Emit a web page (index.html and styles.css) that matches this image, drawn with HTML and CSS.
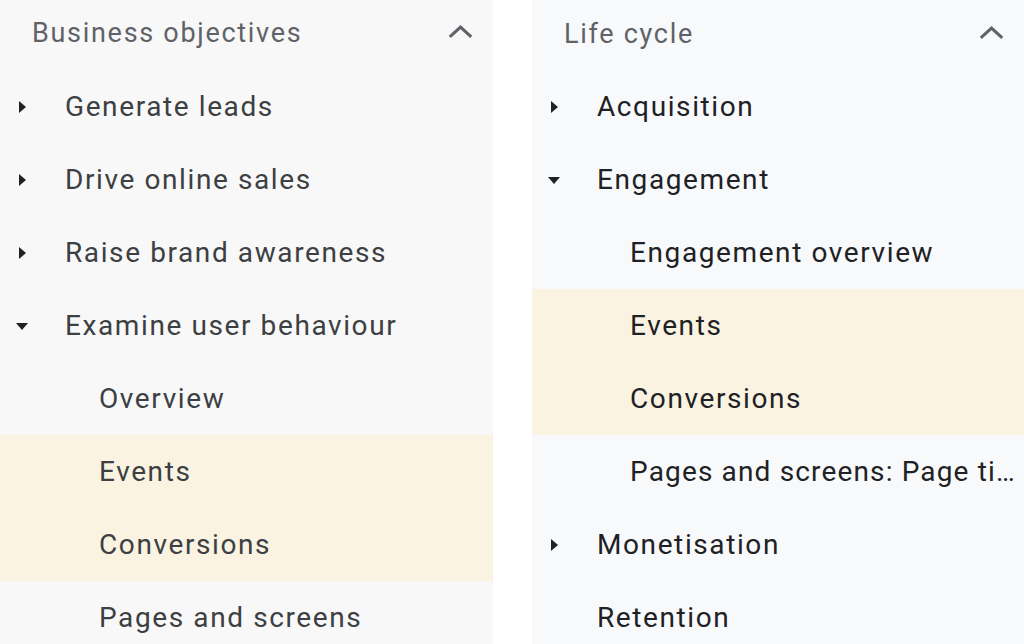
FILE: index.html
```html
<!DOCTYPE html>
<html lang="en">
<head>
    <meta charset="UTF-8">
    <title>Reports navigation</title>
    <link rel="stylesheet" href="styles.css">
</head>
<body>

    <div class="panels">

        <!-- Business objectives collection -->
        <nav class="panel panel-left">
            <div class="panel-header">
                <span class="header-title">Business objectives</span>
                <svg class="chevron" viewBox="0 0 28 16"><path d="M2 14L14 3l12 11"/></svg>
            </div>
            <div class="row"><span class="caret caret-right"></span><span class="label">Generate leads</span></div>
            <div class="row"><span class="caret caret-right"></span><span class="label">Drive online sales</span></div>
            <div class="row"><span class="caret caret-right"></span><span class="label">Raise brand awareness</span></div>
            <div class="row"><span class="caret caret-down"></span><span class="label">Examine user behaviour</span></div>
            <div class="row sub"><span class="label">Overview</span></div>
            <div class="row sub active"><span class="label">Events</span></div>
            <div class="row sub active"><span class="label">Conversions</span></div>
            <div class="row sub"><span class="label">Pages and screens</span></div>
        </nav>

        <!-- Life cycle collection -->
        <nav class="panel panel-right">
            <div class="panel-header">
                <span class="header-title">Life cycle</span>
                <svg class="chevron" viewBox="0 0 28 16"><path d="M2 14L14 3l12 11"/></svg>
            </div>
            <div class="row"><span class="caret caret-right"></span><span class="label">Acquisition</span></div>
            <div class="row"><span class="caret caret-down"></span><span class="label">Engagement</span></div>
            <div class="row sub"><span class="label">Engagement overview</span></div>
            <div class="row sub active"><span class="label">Events</span></div>
            <div class="row sub active"><span class="label">Conversions</span></div>
            <div class="row sub" title="Pages and screens: Page title and screen class"><span class="label label-long">Pages and screens: Page ti…</span></div>
            <div class="row"><span class="caret caret-right"></span><span class="label">Monetisation</span></div>
            <div class="row"><span class="caret"></span><span class="label">Retention</span></div>
        </nav>

    </div>

</body>
</html>
```

FILE: styles.css
```css
/* Page */
body {
    margin: 0;
    background: #ffffff;
    font-family: Roboto, "Noto Sans", sans-serif;
    overflow: hidden;
}

.panels {
    display: flex;
    gap: 39px;
    height: 644px;
}

/* Panels */
.panel {
    width: 493px;
    background: #f8f8f8;
    color: #3c4043;
}

.panel-right {
    width: 492px;
    background: #f8f9fa;
    color: #202124;
}

.panel-header {
    height: 70px;
    display: flex;
    align-items: center;
    justify-content: space-between;
    padding: 0 20px 0 32px;
    box-sizing: border-box;
}

.header-title {
    font-size: 27px;
    letter-spacing: 1.7px;
    color: #5f6368;
    margin-top: -4px;
}

.panel-right .header-title {
    margin-top: -2px;
}

.chevron {
    width: 25px;
    height: 15px;
    margin-top: -8px;
    fill: none;
    stroke: #5f6368;
    stroke-width: 3.4;
}

.panel-right .chevron {
    margin-top: -5px;
}

/* Rows */
.row {
    height: 73px;
    display: flex;
    align-items: center;
    padding-left: 16px;
    padding-right: 4px;
    box-sizing: border-box;
}

.row.sub {
    padding-left: 99px;
}

.panel-right .row.sub {
    padding-left: 98px;
}

.row.active {
    background: #faf3e2;
}

.label {
    font-size: 28px;
    letter-spacing: 1.6px;
    white-space: nowrap;
}

/* truncated item in the narrow column */
.label-long {
    letter-spacing: 1.15px;
}

.caret {
    width: 12px;
    height: 12px;
    margin-right: 37px;
    position: relative;
    flex-shrink: 0;
}

.caret-right::before {
    content: "";
    position: absolute;
    left: 3px;
    top: 0;
    border-top: 6px solid transparent;
    border-bottom: 6px solid transparent;
    border-left: 7px solid #202124;
}

.caret-down::before {
    content: "";
    position: absolute;
    left: 0;
    top: 3px;
    border-left: 6px solid transparent;
    border-right: 6px solid transparent;
    border-top: 7px solid #202124;
}
```
